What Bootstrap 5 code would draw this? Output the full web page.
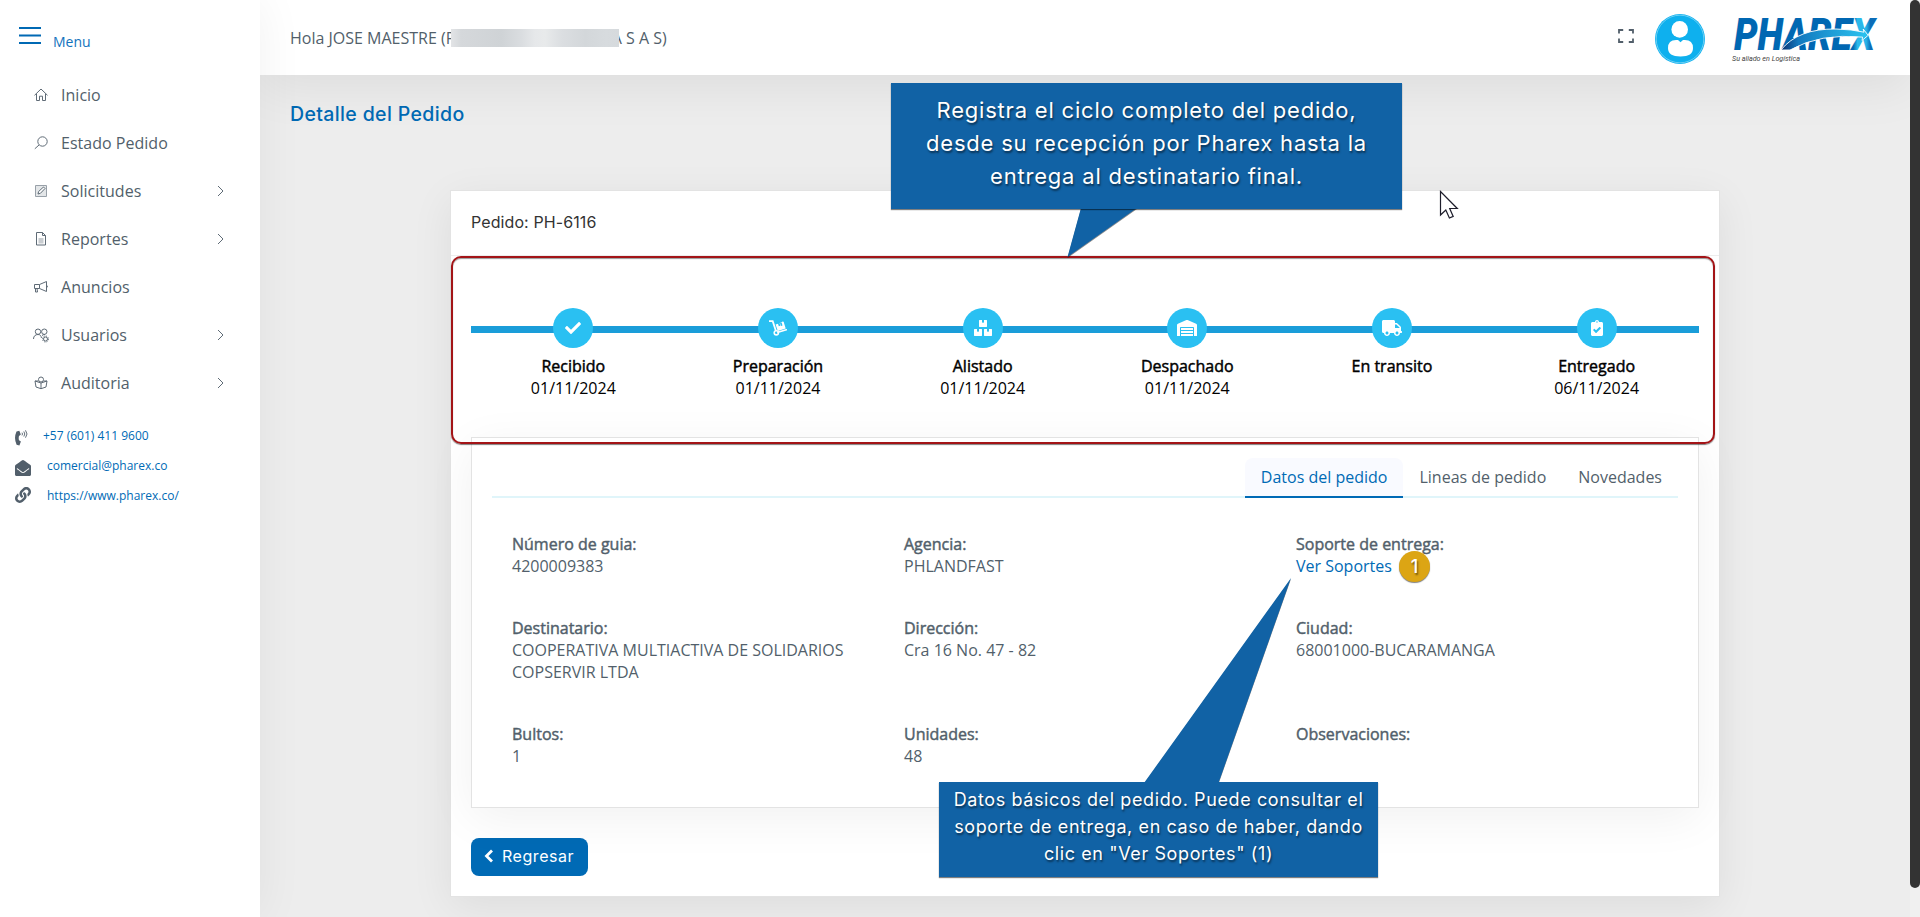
<!DOCTYPE html>
<html lang="es">
<head>
<meta charset="utf-8">
<meta name="viewport" content="width=device-width, initial-scale=1">
<title>Detalle del Pedido</title>
<link href="https://cdn.jsdelivr.net/npm/bootstrap@5.3.0/dist/css/bootstrap.min.css" rel="stylesheet">
<style>
:root{--ph-blue:#006ab5;--ph-text:#525f6b;--ph-head:Inter,"Open Sans",sans-serif}
body{font-family:"Open Sans",sans-serif;font-size:16px;line-height:22px;color:var(--ph-text);background:#ededed;height:917px;overflow:hidden}
a{color:var(--ph-blue);text-decoration:none}
.app{height:917px}
.side{width:260px;box-shadow:0 0 45px rgba(0,0,0,.06);z-index:3}
.side .brandrow{height:71px;padding:26px 0 0 18px;color:#1273bd;font-size:14px}
.side .brandrow span{margin:5px 0 0 11px}
.side .nav-link{height:48px;padding:0 35px 0 33px;color:var(--ph-text);font-size:16px;letter-spacing:.02px}
.side .nav-link>svg:first-child{width:16px;height:16px;margin-right:12px;flex:none}
.ln{fill:none;stroke:#5f6b76;stroke-width:1;stroke-linejoin:round}
.contact{padding:10px 0 0 15px;font-size:12px;margin-top:2px}
.contact li{height:30px}
.contact svg{width:16px;height:16px;fill:#525f6b;margin-top:5px}
.topbar{height:75px;padding:0 32px 0 30px;box-shadow:0 12px 50px rgba(0,0,0,.07);z-index:2}
.blurred{width:168px;height:18px;position:relative;margin:0 -7px 0 -4.5px;background:linear-gradient(90deg,#e2e4e6 0,#d5d8db 6%,#cfd3d6 30%,#dadde0 42%,#e6e8ea 50%,#e8eaeb 56%,#dbdee1 66%,#d3d7da 80%,#d7dbde 92%,#d6dadd 100%)}
.scrollrail{width:10px;background:#f0f0f0;z-index:4}
.scrollrail div{height:888px;background:#333;border-radius:5px}
.page-h{font-family:var(--ph-head);font-weight:500;font-size:19.5px;color:var(--ph-blue);line-height:24px;letter-spacing:.36px;margin:27px 0 0 30px}
.order{width:1270px;height:707px;margin:64px 0 0 190px;border:1px solid #e3e3e3;border-radius:0;box-shadow:0 10px 40px rgba(0,0,0,.07);padding:0 20px}
.order>.card-header{height:65px;margin:0 -20px;padding:0 20px 2px;background:none;border-color:#ededed;color:#333;font-family:var(--ph-head);font-size:16px;letter-spacing:.1px}
.track{height:181px;padding-top:52px;color:#000}
.track .bar{height:7px;background:#1a9dd9;margin-bottom:-25px;margin-top:18px}
.track .dot{width:40px;height:40px;background:#2ac0f2;margin-bottom:7px}
.track .dot svg{height:16px;fill:#fff}
.fb{-webkit-text-stroke:.45px currentColor}
.detail{height:371px;border:1px solid #e3e3e3;border-radius:0;box-shadow:0 10px 45px rgba(0,0,0,.06);padding:20px 20px 0}
.detail .nav-tabs{border-bottom:2px solid #e0f5fa;height:40px}
.detail .nav-link{border:0;border-bottom:2px solid transparent;margin-bottom:-2px;height:40px;padding:8px 16px;color:var(--ph-text);border-radius:8px 8px 0 0}
.detail .nav-link.active{color:var(--ph-blue);background:#f9faff;border-color:var(--ph-blue)}
.fields{padding:35px 4px 0 20px;row-gap:40px;display:grid;grid-template-columns:392px 392px 1fr}
.fields>div{padding-right:35px}
.btn-back{width:117px;height:38px;background:var(--ph-blue);color:#fff;border-radius:8px;font-family:var(--ph-head);font-size:16px;padding:0 13px 2px;margin-top:30px;border:0;line-height:36px;white-space:nowrap;letter-spacing:.55px}
.btn-back:hover{background:#005c9e;color:#fff}
.annot{z-index:10;pointer-events:none}
.note{background:#1162a5;color:#fff;font-family:var(--ph-head);text-align:center;text-shadow:1px 2px 2px rgba(0,0,0,.5);box-shadow:0 1px 1px rgba(0,0,0,.5);white-space:nowrap}
.note-a{left:891px;top:83px;width:511px;height:126px;font-size:22px;line-height:33px;padding-top:11px;letter-spacing:.8px}
.note-b{left:939px;top:782px;width:439px;height:95px;font-size:18px;line-height:27px;padding-top:4px;letter-spacing:.6px}
.frame{left:451px;top:256px;width:1264px;height:188px;border:2px solid #a31417;border-radius:10px;box-shadow:0 1px 1px rgba(0,0,0,.5),inset 0 1px 1px rgba(0,0,0,.4)}
.pin{left:1399px;top:551px;width:31px;height:31px;background:#dca514;color:#fff;font-family:var(--ph-head);font-weight:500;font-size:18px;text-shadow:1px 2px 2px rgba(0,0,0,.55);box-shadow:0 1px 1px rgba(0,0,0,.5)}
</style>
</head>
<body>
<div class="app d-flex position-relative">
  <aside class="side bg-white flex-shrink-0 position-relative">
    <div class="brandrow d-flex align-items-start">
      <svg width="24" height="20" viewBox="0 0 24 20"><path d="M1 2h22M1 9.500h22M1 17h22" stroke="#0069b4" stroke-width="1.800"/></svg>
      <span>Menu</span>
    </div>
    <nav class="nav flex-column">
      <a class="nav-link d-flex align-items-center" href="#"><svg viewBox="0 0 16 16" class="ln"><path d="M1.500 8.300 8 2l6.500 6.300M3.500 7v6.500h3V9.200h3v4.300h3V7"/></svg>Inicio</a>
      <a class="nav-link d-flex align-items-center" href="#"><svg viewBox="0 0 16 16" class="ln"><circle cx="9.500" cy="6.500" r="4.700"/><path d="M6 10 1.800 13.800"/></svg>Estado Pedido</a>
      <a class="nav-link d-flex align-items-center" href="#"><svg viewBox="0 0 16 16" class="ln"><rect x="2.500" y="2.500" width="11" height="11" fill="#e3e6e8" stroke="#98a0a8"/><path d="M5 11l.6-2.500L10.500 4l1.500 1.500-4.600 4.800z" fill="#fff"/></svg>Solicitudes<svg class="ms-auto ln" width="9" height="14" viewBox="0 0 9 14"><path d="M2 2l5 5-5 5"/></svg></a>
      <a class="nav-link d-flex align-items-center" href="#"><svg viewBox="0 0 16 16" class="ln"><path d="M3.500 1.500h6l3 3v9.500h-9zM9.500 1.500v3h3"/><path d="M5.500 7h5v5.500h-5z" fill="#c9cdd1" stroke="none"/></svg>Reportes<svg class="ms-auto ln" width="9" height="14" viewBox="0 0 9 14"><path d="M2 2l5 5-5 5"/></svg></a>
      <a class="nav-link d-flex align-items-center" href="#"><svg viewBox="0 0 16 16" class="ln"><path d="M1.500 5.500h5l7-3v10l-7-3h-5zM6.500 5.500v4M2.500 9.500V13h2l-.5-3.500M13.500 6.500c1.300 0 1.300 2 0 2"/></svg>Anuncios</a>
      <a class="nav-link d-flex align-items-center" href="#"><svg viewBox="0 0 16 16" class="ln"><circle cx="5" cy="4.700" r="2.700"/><path d="M.5 12c0-3 2-4.500 4.500-4.500S8 9 8.500 11"/><circle cx="11.300" cy="4.700" r="2.700"/><path d="M9 8.500c.8-.8 2-1 3-1"/><circle cx="12.500" cy="12" r="2"/><circle cx="12.500" cy="12" r="3" stroke-dasharray="1.200 1.160"/></svg>Usuarios<svg class="ms-auto ln" width="9" height="14" viewBox="0 0 9 14"><path d="M2 2l5 5-5 5"/></svg></a>
      <a class="nav-link d-flex align-items-center" href="#"><svg viewBox="0 0 16 16" class="ln"><circle cx="8" cy="4.500" r="2.500"/><path d="M5.500 6H2l1 6 5 1.700L13 12l1-6h-3.500M2 6l6 2 6-2M8 8v5.500"/></svg>Auditoria<svg class="ms-auto ln" width="9" height="14" viewBox="0 0 9 14"><path d="M2 2l5 5-5 5"/></svg></a>
    </nav>
    <ul class="contact list-unstyled mb-0 pt-3">
      <li class="d-flex"><svg viewBox="0 0 16 16"><path d="M1.500 1.400 4.300.8 5.800 4.600 4 6q-.6 2.200 0 4.200l1.900 1.300-1.500 3.900-2.800-.6Q-1.500 8 1.500 1.400z"/><path d="M7 2.700q1 1.300 0 2.700M8.800 1.500q2 2.500 0 5M10.500.3q3 3.700 0 7.400" fill="none" stroke="#525f6b" stroke-width=".9"/></svg><a href="#" style="margin-left:12px">+57 (601) 411 9600</a></li>
      <li class="d-flex"><svg viewBox="0 0 512 512"><path d="M512 464c0 26.510-21.490 48-48 48H48c-26.510 0-48-21.490-48-48V200.724a48 48 0 0 1 18.387-37.776c24.913-19.529 45.501-35.365 164.200-121.511C199.412 29.170 232.797-.347 256 .003c23.198-.354 56.596 29.172 73.413 41.433 118.687 86.137 139.303 101.995 164.200 121.512A48 48 0 0 1 512 200.724V464zm-65.666-196.605c-2.563-3.728-7.700-4.595-11.339-1.907-22.845 16.873-55.462 40.705-105.582 77.079-16.825 12.266-50.210 41.781-73.413 41.430-23.211.344-56.559-29.143-73.413-41.430-50.114-36.370-82.734-60.204-105.582-77.079-3.639-2.688-8.776-1.821-11.339 1.907l-9.072 13.196a7.998 7.998 0 0 0 1.839 10.967c22.887 16.899 55.454 40.690 105.303 76.868 20.274 14.781 56.524 47.813 92.264 47.573 35.724.242 71.961-32.771 92.263-47.573 49.850-36.179 82.418-59.970 105.303-76.868a7.998 7.998 0 0 0 1.839-10.967l-9.071-13.196z"/></svg><a href="#" style="margin-left:16px">comercial@pharex.co</a></li>
      <li class="d-flex"><svg viewBox="0 0 512 512" style="margin-top:2px"><path d="M326.612 185.391c59.747 59.809 58.927 155.698.36 214.590-.11.120-.24.250-.36.370l-67.200 67.200c-59.270 59.270-155.699 59.262-214.960 0-59.270-59.260-59.270-155.700 0-214.960l37.106-37.106c9.840-9.840 26.786-3.300 27.294 10.606.648 17.722 3.826 35.527 9.690 52.721 1.986 5.822.567 12.262-3.783 16.612l-13.087 13.087c-28.026 28.026-28.905 73.660-1.155 101.960 28.024 28.579 74.086 28.749 102.325.510l67.200-67.190c28.191-28.191 28.073-73.757 0-101.830-3.701-3.694-7.429-6.564-10.341-8.569a16.037 16.037 0 0 1-6.947-12.606c-.396-10.567 3.348-21.456 11.698-29.806l21.054-21.055c5.521-5.521 14.182-6.199 20.584-1.731a152.482 152.482 0 0 1 20.522 17.197zM467.547 44.449c-59.261-59.262-155.690-59.270-214.960 0l-67.200 67.200c-.12.120-.25.250-.36.370-58.566 58.892-59.387 154.781.360 214.590a152.454 152.454 0 0 0 20.521 17.196c6.402 4.468 15.064 3.789 20.584-1.731l21.054-21.055c8.350-8.350 12.094-19.239 11.698-29.806a16.037 16.037 0 0 0-6.947-12.606c-2.912-2.005-6.640-4.875-10.341-8.569-28.073-28.073-28.191-73.639 0-101.830l67.200-67.190c28.239-28.239 74.300-28.069 102.325.510 27.750 28.300 26.872 73.934-1.155 101.960l-13.087 13.087c-4.350 4.350-5.769 10.790-3.783 16.612 5.864 17.194 9.042 34.999 9.690 52.721.509 13.906 17.454 20.446 27.294 10.606l37.106-37.106c59.271-59.259 59.271-155.699.001-214.959z"/></svg><a href="#" style="margin-left:16px">https://www.pharex.co/</a></li>
    </ul>
  </aside>

  <div class="flex-grow-1 d-flex flex-column overflow-hidden">
    <header class="topbar navbar bg-white flex-nowrap position-relative flex-shrink-0">
      <div class="d-flex align-items-center"><span>Hola JOSE MAESTRE (P</span><span class="blurred"></span><span>A S A S)</span></div>
      <div class="d-flex align-items-center">
        <svg width="16" height="14" viewBox="0 0 16 14" style="margin:-4px 21px 0 0"><path d="M1 4.500V1h4.200M10.800 1H15v3.500M15 9.500V13h-4.200M5.200 13H1V9.500" fill="none" stroke="#525f6b" stroke-width="1.800"/></svg>
        <svg width="50" height="50" viewBox="0 0 50 50" style="margin:3px 27px 0 0"><circle cx="25" cy="25" r="25" fill="#0eb0ee"/><circle cx="25" cy="25" r="23.800" fill="none" stroke="#8fdcf8" stroke-width=".7"/><circle cx="24.700" cy="15.400" r="8.300" fill="#fff"/><path d="M25.500 28.300 23 26q-10-1-10 8 0 8.500 12.500 8.500T38 34q0-9-10-8z" fill="#fff"/></svg>
        <svg width="146" height="48" viewBox="0 0 146 48" style="margin-top:3px" overflow="visible">
          <defs><linearGradient id="sw"><stop offset="0" stop-color="#0b2f6e"/><stop offset=".2" stop-color="#1379bf"/><stop offset="1" stop-color="#2bc4f0"/></linearGradient>
          <linearGradient id="pt"><stop offset="0" stop-color="#0067b2"/><stop offset=".83" stop-color="#0067b2"/><stop offset=".86" stop-color="#2bb9ea"/><stop offset=".92" stop-color="#29b4e8"/><stop offset=".95" stop-color="#0b6db8"/></linearGradient></defs>
          <text x="2" y="34.500" font-family="Roboto,sans-serif" font-weight="900" font-style="italic" font-size="43.500" textLength="141" lengthAdjust="spacingAndGlyphs" fill="url(#pt)">PHAREX</text>
          <path d="M49 35Q66 13.500 104 14q16 .3 28 3.200l-.8-3.200 5 6.300-6.200 5.200.6-3.400Q88 18 58 35z" fill="url(#sw)" stroke="#fff" stroke-width=".9"/>
          <text x="0" y="45.500" font-family="Roboto,sans-serif" font-style="italic" font-size="8" textLength="68" lengthAdjust="spacingAndGlyphs" fill="#444">Su aliado en Logística</text>
        </svg>
      </div>
    </header>

    <main>
      <h1 class="page-h">Detalle del Pedido</h1>
      <section class="order card">
        <div class="card-header d-flex align-items-center">Pedido: PH-6116</div>
        <div class="track">
          <div class="bar"></div>
          <div class="row g-0 text-center row-cols-6">
            <div class="col"><div class="dot rounded-circle d-flex align-items-center justify-content-center mx-auto"><svg viewBox="0 0 512 512"><path d="M173.898 439.404l-166.400-166.400c-9.997-9.997-9.997-26.206 0-36.204l36.203-36.204c9.997-9.998 26.207-9.998 36.204 0L192 312.690 432.095 72.596c9.997-9.997 26.207-9.997 36.204 0l36.203 36.204c9.997 9.997 9.997 26.206 0 36.204l-294.400 294.401c-9.998 9.997-26.207 9.997-36.204-.001z"/></svg></div><div class="fb">Recibido</div><div>01/11/2024</div></div>
            <div class="col"><div class="dot rounded-circle d-flex align-items-center justify-content-center mx-auto"><svg viewBox="0 0 18 16"><path d="M.3 1.200h3.400l3 9" fill="none" stroke="#fff" stroke-width="1.800" stroke-linecap="round"/><circle cx="7.300" cy="12.800" r="2.100" fill="none" stroke="#fff" stroke-width="1.600"/><path d="M9 12.300 17.300 9.700" stroke="#fff" stroke-width="1.600" stroke-linecap="round"/><path d="M6.600 4.500 9 3.700l.8 2.500 1.600-.5-.8-2.500 3.100-1.700q.8-.2 1 .5l2 6.400-7.900 2.500z"/><path d="M11 3.200l1 2.800 1.500-.5-.9-2.900z" fill="#2ac0f2"/></svg></div><div class="fb">Preparación</div><div>01/11/2024</div></div>
            <div class="col"><div class="dot rounded-circle d-flex align-items-center justify-content-center mx-auto"><svg viewBox="0 0 576 512"><path d="M560 288h-80v96l-32-21.300-32 21.300v-96h-80c-8.800 0-16 7.200-16 16v192c0 8.800 7.200 16 16 16h224c8.800 0 16-7.200 16-16V304c0-8.800-7.200-16-16-16zm-384-64h224c8.800 0 16-7.200 16-16V16c0-8.800-7.200-16-16-16h-80v96l-32-21.300L256 96V0h-80c-8.800 0-16 7.200-16 16v192c0 8.800 7.200 16 16 16zm64 64h-80v96l-32-21.300L96 384v-96H16c-8.800 0-16 7.200-16 16v192c0 8.800 7.200 16 16 16h224c8.800 0 16-7.200 16-16V304c0-8.800-7.200-16-16-16z"/></svg></div><div class="fb">Alistado</div><div>01/11/2024</div></div>
            <div class="col"><div class="dot rounded-circle d-flex align-items-center justify-content-center mx-auto"><svg viewBox="0 0 640 512"><path d="M504 352H136.400c-4.400 0-8 3.600-8 8l-.1 48c0 4.400 3.600 8 8 8H504c4.400 0 8-3.600 8-8v-48c0-4.400-3.600-8-8-8zm0 96H136.100c-4.400 0-8 3.600-8 8l-.1 48c0 4.400 3.600 8 8 8h368c4.400 0 8-3.600 8-8v-48c0-4.400-3.600-8-8-8zm0-192H136.600c-4.400 0-8 3.600-8 8l-.1 48c0 4.400 3.600 8 8 8H504c4.400 0 8-3.600 8-8v-48c0-4.400-3.600-8-8-8zm106.500-139L338.400 3.700a48.150 48.150 0 0 0-36.900 0L29.500 117C11.700 124.500 0 141.900 0 161.300V504c0 4.400 3.600 8 8 8h80c4.400 0 8-3.600 8-8V256c0-17.600 14.600-32 32.600-32h382.800c18 0 32.600 14.400 32.600 32v248c0 4.400 3.600 8 8 8h80c4.400 0 8-3.600 8-8V161.300c0-19.400-11.700-36.800-29.500-44.300z"/></svg></div><div class="fb">Despachado</div><div>01/11/2024</div></div>
            <div class="col"><div class="dot rounded-circle d-flex align-items-center justify-content-center mx-auto"><svg viewBox="0 0 640 512"><path d="M624 352h-16V243.900c0-12.700-5.100-24.900-14.100-33.900L494 110.100c-9-9-21.200-14.100-33.900-14.100H416V48c0-26.500-21.500-48-48-48H48C21.500 0 0 21.500 0 48v320c0 26.500 21.500 48 48 48h16c0 53 43 96 96 96s96-43 96-96h128c0 53 43 96 96 96s96-43 96-96h48c8.800 0 16-7.200 16-16v-32c0-8.800-7.200-16-16-16zM160 464c-26.500 0-48-21.500-48-48s21.500-48 48-48 48 21.500 48 48-21.500 48-48 48zm320 0c-26.500 0-48-21.500-48-48s21.500-48 48-48 48 21.500 48 48-21.500 48-48 48zm80-208H416V144h44.100l99.900 99.900V256z"/></svg></div><div class="fb">En transito</div></div>
            <div class="col"><div class="dot rounded-circle d-flex align-items-center justify-content-center mx-auto"><svg viewBox="0 0 384 512"><path d="M336 64h-80c0-35.300-28.700-64-64-64s-64 28.700-64 64H48C21.500 64 0 85.500 0 112v352c0 26.500 21.500 48 48 48h288c26.500 0 48-21.500 48-48V112c0-26.500-21.500-48-48-48zM192 40c13.300 0 24 10.700 24 24s-10.700 24-24 24-24-10.700-24-24 10.700-24 24-24zm121.200 231.800l-143 141.800c-4.700 4.700-12.300 4.600-17-.1l-82.600-83.300c-4.700-4.700-4.600-12.300.1-17L99.100 285c4.700-4.700 12.300-4.600 17 .1l46 46.400 106-105.200c4.700-4.700 12.300-4.600 17 .1l28.200 28.400c4.700 4.800 4.600 12.300-.1 17z"/></svg></div><div class="fb">Entregado</div><div>06/11/2024</div></div>
          </div>
        </div>

        <div class="detail card">
          <ul class="nav nav-tabs justify-content-end">
            <li class="nav-item"><a class="nav-link active" href="#">Datos del pedido</a></li>
            <li class="nav-item"><a class="nav-link" href="#">Lineas de pedido</a></li>
            <li class="nav-item"><a class="nav-link" href="#">Novedades</a></li>
          </ul>
          <div class="fields">
            <div><div class="fb">Número de guia:</div>4200009383</div>
            <div><div class="fb">Agencia:</div>PHLANDFAST</div>
            <div><div class="fb">Soporte de entrega:</div><a href="#">Ver Soportes</a></div>
            <div><div class="fb">Destinatario:</div>COOPERATIVA MULTIACTIVA DE SOLIDARIOS COPSERVIR LTDA</div>
            <div><div class="fb">Dirección:</div>Cra 16 No. 47 - 82</div>
            <div><div class="fb">Ciudad:</div>68001000-BUCARAMANGA</div>
            <div><div class="fb">Bultos:</div>1</div>
            <div><div class="fb">Unidades:</div>48</div>
            <div><div class="fb">Observaciones:</div></div>
          </div>
        </div>

        <a class="btn btn-back d-flex align-items-center" href="#"><svg width="10" height="14" viewBox="0 0 10 14" class="me-2 flex-shrink-0"><path d="M8 1.500 2.500 7 8 12.500" fill="none" stroke="#fff" stroke-width="2.800"/></svg><span>Regresar</span></a>
      </section>
    </main>
  </div>
  <div class="scrollrail flex-shrink-0"><div></div></div>

  <div class="frame annot position-absolute"></div>
  <svg class="annot position-absolute top-0 start-0" width="1920" height="917" style="filter:drop-shadow(0 1px .5px rgba(0,0,0,.45))"><path d="M1081 208h56l-69.500 49z M1144 783 1291 578 1218.500 783z" fill="#1162a5"/></svg>
  <div class="note note-a annot position-absolute">Registra el ciclo completo del pedido,<br>desde su recepción por Pharex hasta la<br>entrega al destinatario final.</div>
  <div class="note note-b annot position-absolute">Datos básicos del pedido. Puede consultar el<br>soporte de entrega, en caso de haber, dando<br>clic en "Ver Soportes" (1)</div>
  <div class="pin annot position-absolute rounded-circle d-flex align-items-center justify-content-center">1</div>
  <svg class="annot position-absolute" style="left:1439px;top:190px" width="20" height="30" viewBox="0 0 20 30"><path d="M1.500 1.500v23.500l5.300-5 3.600 8 3.800-1.600-3.500-7.900h7.600z" fill="#fff" stroke="#1d1d2b" stroke-width="1.200"/></svg>
</div>
<script src="https://cdn.jsdelivr.net/npm/bootstrap@5.3.0/dist/js/bootstrap.bundle.min.js"></script>
</body>
</html>
